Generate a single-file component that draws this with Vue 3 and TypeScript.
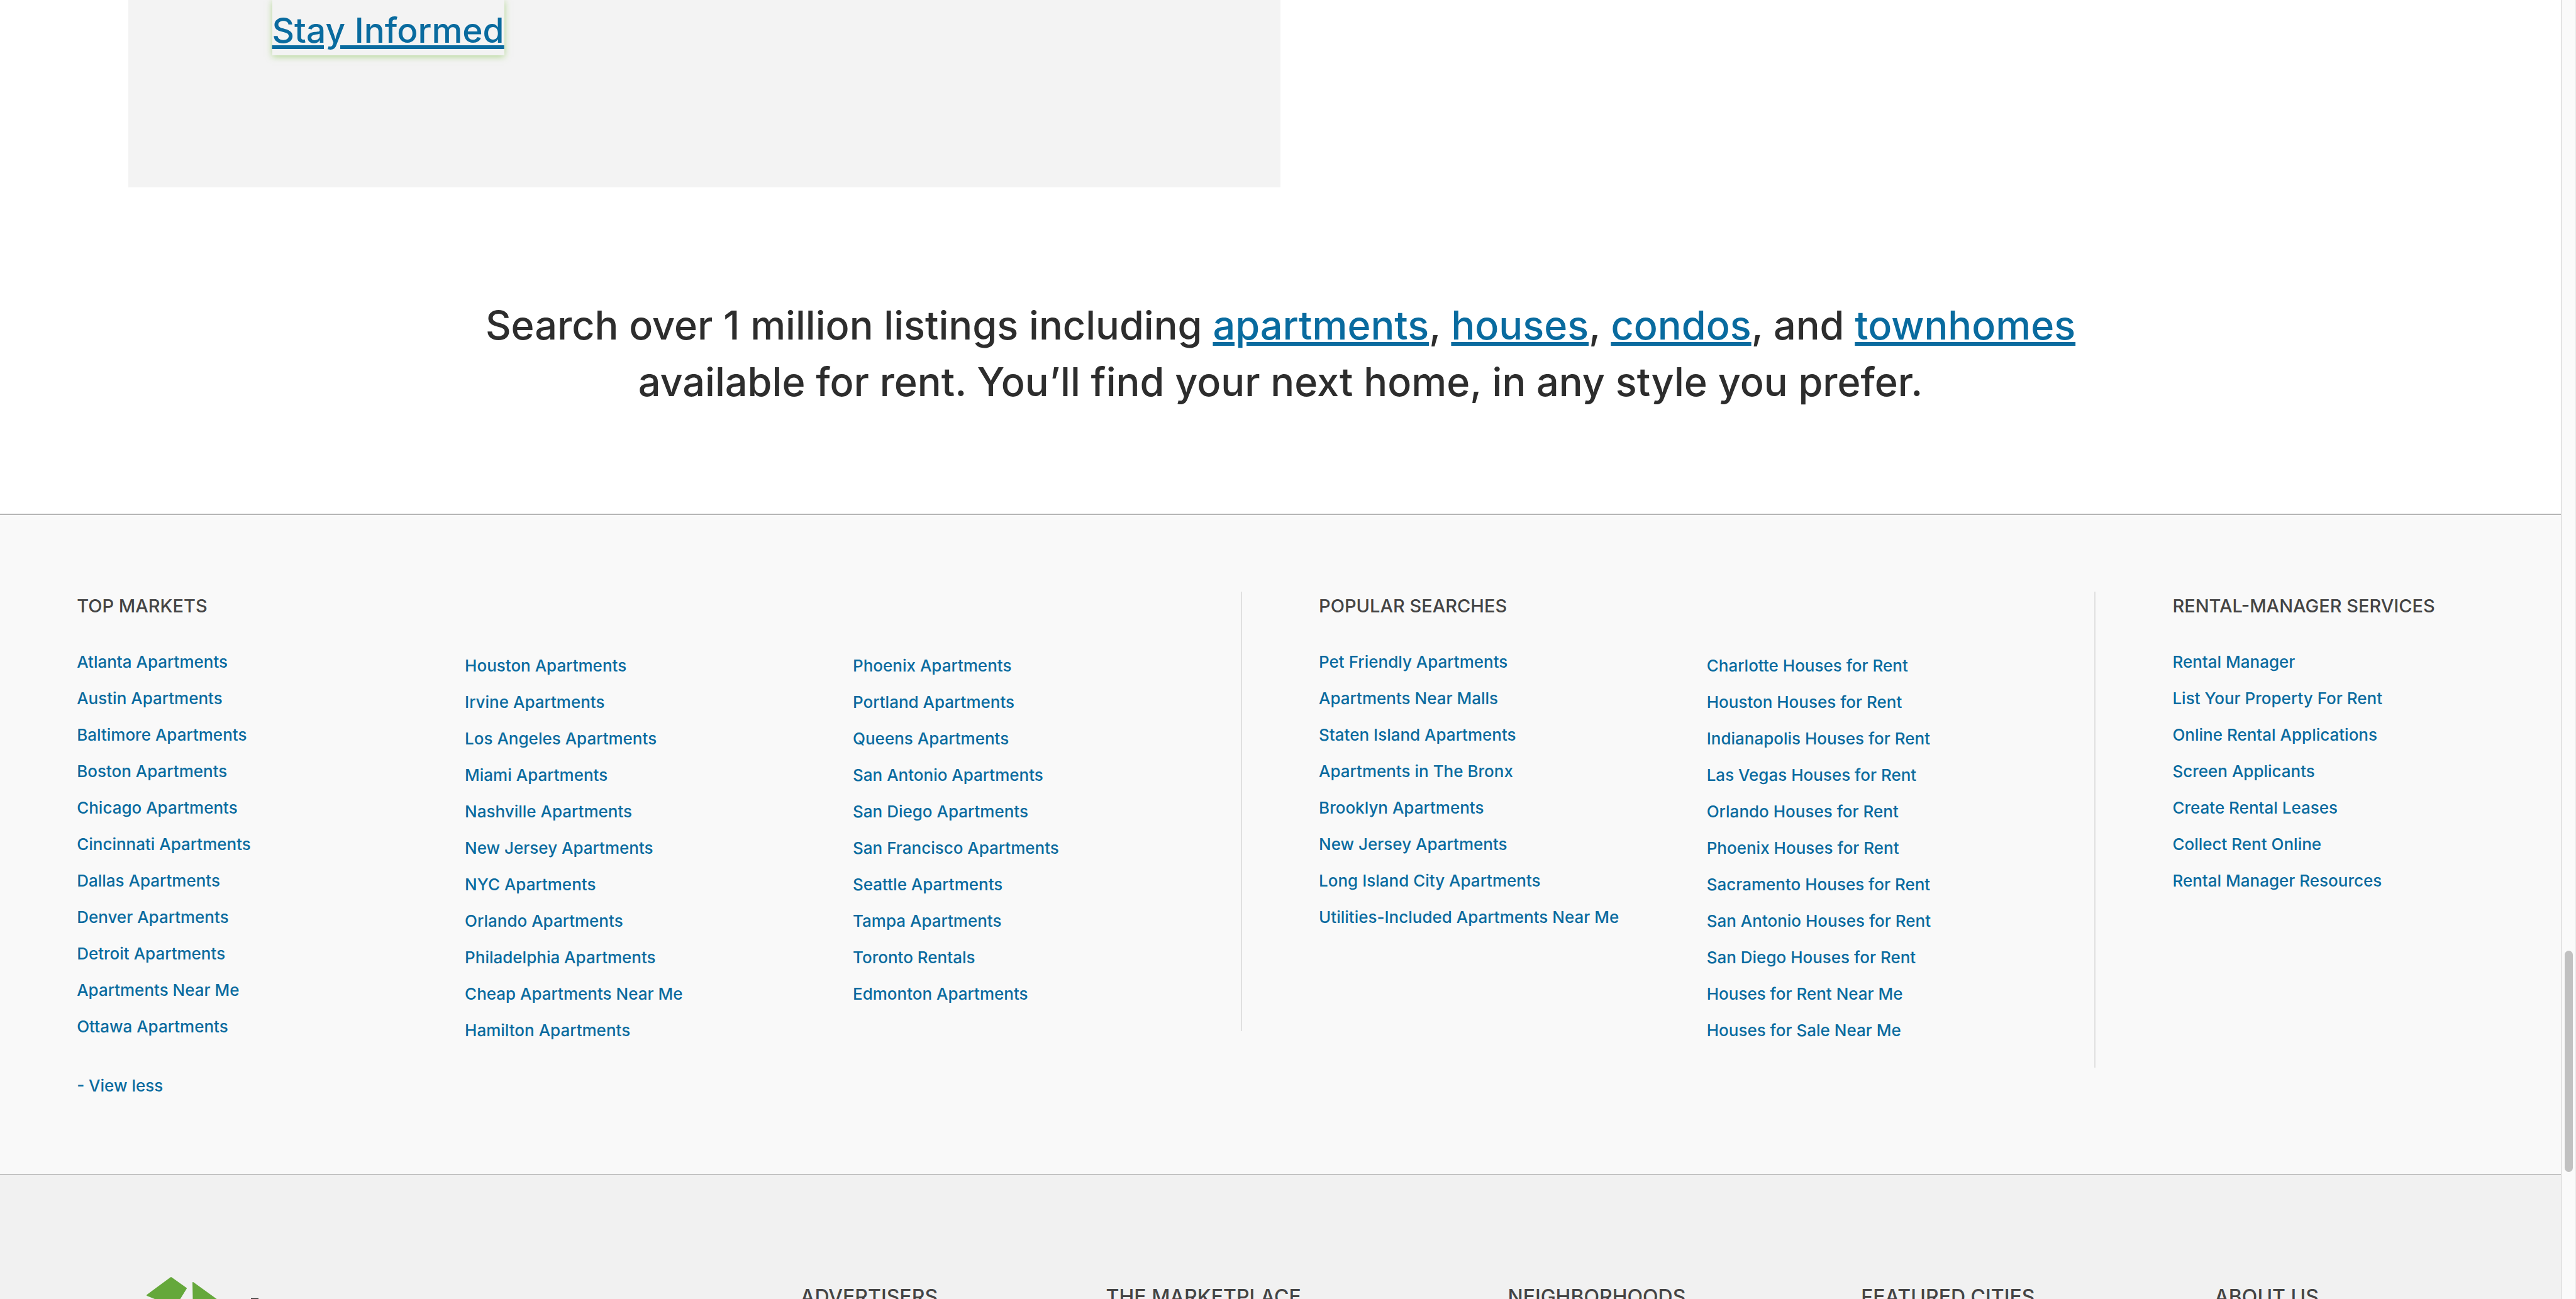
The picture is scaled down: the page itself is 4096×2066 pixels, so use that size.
<script setup lang="ts">
interface LinkGroup {
  title: string
  columns: string[][]
  span: number
  toggle?: string
}

const groups: LinkGroup[] = [
  {
    title: 'TOP MARKETS',
    span: 3,
    toggle: '- View less',
    columns: [
      [
        'Atlanta Apartments', 'Austin Apartments', 'Baltimore Apartments', 'Boston Apartments',
        'Chicago Apartments', 'Cincinnati Apartments', 'Dallas Apartments', 'Denver Apartments',
        'Detroit Apartments', 'Apartments Near Me', 'Ottawa Apartments',
      ],
      [
        'Houston Apartments', 'Irvine Apartments', 'Los Angeles Apartments', 'Miami Apartments',
        'Nashville Apartments', 'New Jersey Apartments', 'NYC Apartments', 'Orlando Apartments',
        'Philadelphia Apartments', 'Cheap Apartments Near Me', 'Hamilton Apartments',
      ],
      [
        'Phoenix Apartments', 'Portland Apartments', 'Queens Apartments', 'San Antonio Apartments',
        'San Diego Apartments', 'San Francisco Apartments', 'Seattle Apartments', 'Tampa Apartments',
        'Toronto Rentals', 'Edmonton Apartments',
      ],
    ],
  },
  {
    title: 'POPULAR SEARCHES',
    span: 2,
    columns: [
      [
        'Pet Friendly Apartments', 'Apartments Near Malls', 'Staten Island Apartments',
        'Apartments in The Bronx', 'Brooklyn Apartments', 'New Jersey Apartments',
        'Long Island City Apartments', 'Utilities-Included Apartments Near Me',
      ],
      [
        'Charlotte Houses for Rent', 'Houston Houses for Rent', 'Indianapolis Houses for Rent',
        'Las Vegas Houses for Rent', 'Orlando Houses for Rent', 'Phoenix Houses for Rent',
        'Sacramento Houses for Rent', 'San Antonio Houses for Rent', 'San Diego Houses for Rent',
        'Houses for Rent Near Me', 'Houses for Sale Near Me',
      ],
    ],
  },
  {
    title: 'RENTAL-MANAGER SERVICES',
    span: 1,
    columns: [
      [
        'Rental Manager', 'List Your Property For Rent', 'Online Rental Applications',
        'Screen Applicants', 'Create Rental Leases', 'Collect Rent Online',
        'Rental Manager Resources',
      ],
    ],
  },
]

const footerTitles: string[] = ['ADVERTISERS', 'THE MARKETPLACE', 'NEIGHBORHOODS', 'FEATURED CITIES', 'ABOUT US']
</script>

<template>
  <div class="window">
    <div class="page">
      <section class="promo">
        <a class="promo-link" href="#">Stay Informed</a>
      </section>

      <p class="pitch">
        Search over 1 million listings including <a href="#">apartments</a>, <a href="#">houses</a>,
        <a href="#">condos</a>, and <a href="#">townhomes</a><br />
        available for rent. You’ll find your next home, in any style you prefer.
      </p>

      <nav class="markets">
        <section
          v-for="group in groups"
          :key="group.title"
          class="group"
          :style="{ flexGrow: group.span }"
        >
          <div v-for="(column, i) in group.columns" :key="i" class="column">
            <h2 v-if="i === 0">{{ group.title }}</h2>
            <ul>
              <li v-for="name in column" :key="name"><a href="#">{{ name }}</a></li>
            </ul>
            <button v-if="i === 0 && group.toggle" class="toggle" type="button">{{ group.toggle }}</button>
          </div>
        </section>
      </nav>

      <footer class="footer">
        <svg class="logo" viewBox="0 0 180 80" aria-hidden="true">
          <g fill="#65a83b" stroke="#65a83b" stroke-width="2" stroke-linejoin="round">
            <path d="M40 2 L64 19 L46 48 L2 30 Z" />
            <path d="M75 10 L133 52 L76 60 Z" />
          </g>
          <rect x="167" y="35" width="12" height="10" fill="#1a1a1a" />
        </svg>
        <h2 v-for="title in footerTitles" :key="title">{{ title }}</h2>
      </footer>
    </div>
    <div class="scrollbar"><div class="thumb"></div></div>
  </div>
</template>

<style>
body {
  overflow: hidden;
}
</style>

<style scoped>
.window {
  display: flex;
  height: 100vh;
  overflow: hidden;
  background: #fff;
  font-family: Inter, "Liberation Sans", sans-serif;
  font-weight: 500;
}

.page {
  display: flex;
  flex: 1;
  flex-direction: column;
}

a {
  color: #096b9f;
}

.promo {
  box-sizing: border-box;
  width: 45%;
  margin-left: 5%;
  padding: 0 0 210px 229px;
  background: #f3f3f3;
}

.promo-link {
  display: inline-block;
  height: 88px;
  font-size: 55px;
  line-height: 96px;
  text-decoration-thickness: 6px;
  text-underline-offset: 4px;
  vertical-align: top;
  box-shadow: 0 2px 10px rgb(122 190 64 / 55%);
}

.pitch {
  margin: 174px 0 165px;
  color: #2d2d2d;
  font-size: 63px;
  line-height: 90px;
  text-align: center;
}

.pitch a {
  text-decoration-thickness: 6px;
  text-underline-offset: 4px;
}

.markets {
  display: flex;
  border-top: 2px solid #b5b5b5;
  border-bottom: 2px solid #c3c3c3;
  padding: 122px 0 124px;
  background: #f9f9f9;
}

.group {
  box-sizing: border-box;
  display: flex;
  flex: 1 1 3%;
  align-items: flex-start;
  padding-left: 3%;
}

.column {
  box-sizing: border-box;
  flex: 1 1 0;
  min-width: 0;
}

.column + .column {
  padding: 102px 0 17px;
}

.column:last-child:not(:first-child) {
  border-right: 2px solid #e0e0e0;
}

h2 {
  margin: 0;
  color: #444;
  font-size: 29px;
  font-weight: 500;
  line-height: 46px;
  white-space: nowrap;
}

.column h2 {
  margin-bottom: 50px;
}

ul {
  margin: 0;
  padding: 0;
  list-style: none;
}

li {
  height: 58px;
  font-size: 26px;
  line-height: 32px;
}

li a {
  text-decoration: none;
  white-space: nowrap;
}

.toggle {
  display: block;
  margin-top: 36px;
  border: 0;
  padding: 0;
  background: none;
  color: #096b9f;
  font: inherit;
  font-size: 26px;
  line-height: 32px;
}

.footer {
  display: grid;
  flex: 1;
  grid-template-columns: 1041fr 486fr 639fr 562fr 562fr 551fr;
  align-items: start;
  padding: 161px 0 0 232px;
  background: #f1f1f1;
}

.logo {
  width: 180px;
  height: 80px;
}

.footer h2 {
  margin-top: 10px;
  font-size: 32px;
}

.scrollbar {
  box-sizing: border-box;
  width: 24px;
  border-right: 1px solid #e8e8e8;
  border-left: 2px solid #e4e4e4;
  background: #fafafa;
}

.thumb {
  width: 13px;
  height: 17vh;
  margin: 73.2vh auto 0 4px;
  border-radius: 7px;
  background: #c1c1c1;
}
</style>
